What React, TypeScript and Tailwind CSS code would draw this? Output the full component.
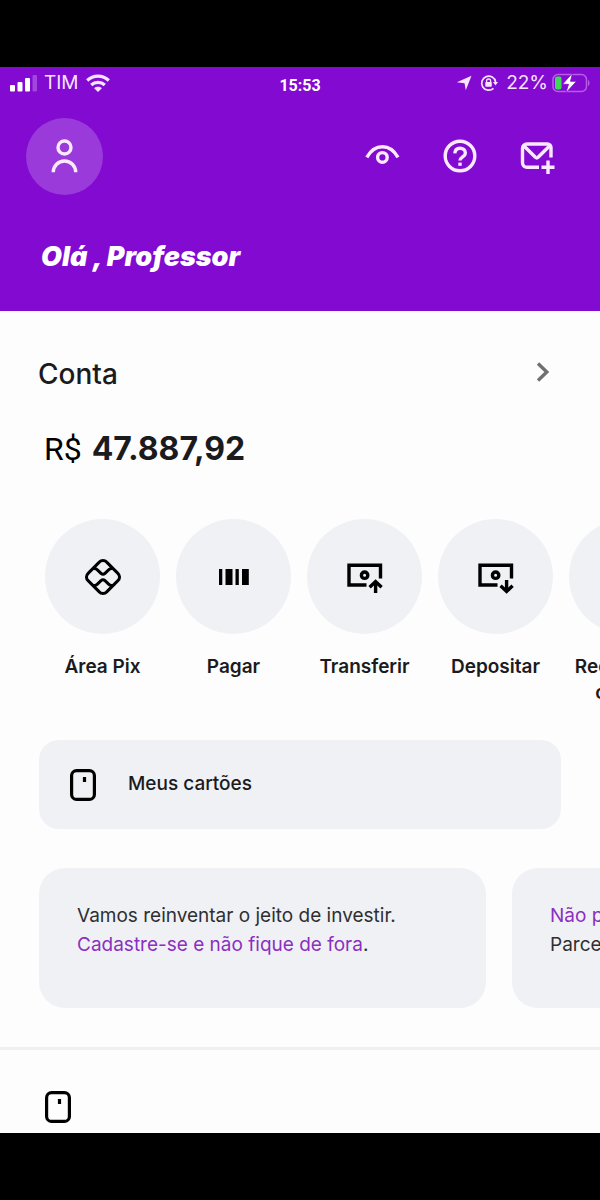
import type { ReactNode } from "react"

const strokeProps = {
  fill: "none",
  stroke: "currentColor",
  strokeWidth: 3.4,
  viewBox: "0 0 40 40",
  "aria-hidden": true,
}

function UserIcon() {
  return (
    <svg {...strokeProps} className="size-10">
      <circle cx="19.5" cy="10.5" r="6.5" />
      <path d="M8.3 35.2a11.2 11.2 0 0 1 22.4 0" />
    </svg>
  )
}

function EyeIcon() {
  return (
    <svg {...strokeProps} className="size-10">
      <path d="M4.8 20.4C12.6 6.2 28.2 6.2 36 20.4" />
      <circle cx="20.4" cy="20.4" r="4.8" />
    </svg>
  )
}

function HelpIcon() {
  return (
    <svg {...strokeProps} className="size-10">
      <circle cx="20" cy="19" r="14.8" />
      <path d="M14.8 16.4c.2-3.4 2.4-5.2 5.2-5.2 3.2 0 5.4 2 5.4 4.7 0 4-5.4 3.9-5.4 7.7" />
      <path d="M20 25.6v3.2" />
    </svg>
  )
}

function MailPlusIcon() {
  return (
    <svg {...strokeProps} className="size-10">
      <path d="M21 30.3H9a4.5 4.5 0 0 1-4.5-4.5V11.5A4.5 4.5 0 0 1 9 7h20.5a3.5 3.5 0 0 1 3.5 3.5v10" />
      <path d="M5.5 8.5l11.9 11.8a2 2 0 0 0 2.7 0L32 8.5" />
      <path d="M30 23.5V37M23.5 30.3h13" />
    </svg>
  )
}

function PixIcon() {
  return (
    <svg {...strokeProps} strokeWidth={3} className="size-10">
      <path d="M16.3 5.1 5.1 16.3a5 5 0 0 0 0 7.4l11.2 11.2a5 5 0 0 0 7.4 0l11.2-11.2a5 5 0 0 0 0-7.4L23.7 5.1a5 5 0 0 0-7.4 0Z" />
      <path d="M10.2 11.6h1.2c1.2 0 2.2.5 3 1.3l3.6 3.4c1.2 1.1 2.800 1.100 4 0l3.600-3.400c.8-.8 1.800-1.300 3-1.300h1.200" />
      <path d="M10.2 28.4h1.2c1.2 0 2.2-.5 3-1.3l3.6-3.4c1.2-1.1 2.800-1.100 4 0l3.600 3.400c.8.8 1.800 1.300 3 1.300h1.200" />
    </svg>
  )
}

function BarcodeIcon() {
  return (
    <svg viewBox="0 0 40 40" fill="currentColor" className="size-10" aria-hidden>
      <path d="M5 12h3.3v16H5zM11.5 12h7v16h-7zM21.5 12h3.3v16h-3.3zM28 12h6.8v16H28z" />
    </svg>
  )
}

function MoneyIcon({ direction }: { direction: "up" | "down" }) {
  return (
    <svg {...strokeProps} className="size-10">
      <path d="M21.5 28H4V8.2h31.5v13.3" />
      <circle cx="19.6" cy="18.2" r="3.2" />
      {direction === "up" ? (
        <path d="M30.6 36V24.5M24.6 30.2l6-5.6 6 5.6" />
      ) : (
        <path d="M30.6 23v11.5M24.6 28.8l6 5.6 6-5.6" />
      )}
    </svg>
  )
}

function PhoneIcon() {
  return (
    <svg {...strokeProps} className="size-10">
      <rect x="10" y="3" width="20" height="34" rx="3" />
      <path d="M17 31h6" />
    </svg>
  )
}

function CardIcon() {
  return (
    <svg viewBox="0 0 26 32" fill="none" stroke="currentColor" strokeWidth="3.2" className="h-8 w-[26px] text-black" aria-hidden>
      <rect x="1.6" y="1.6" width="22.8" height="28.8" rx="5" />
      <path d="M14.5 8v5" />
    </svg>
  )
}

function SignalIcon() {
  return (
    <svg viewBox="0 0 27 18" fill="currentColor" className="h-[18px] w-[27px] text-white" aria-hidden>
      <rect y="11" width="5" height="6.5" rx="1" />
      <rect x="7.5" y="8" width="5" height="9.5" rx="1" />
      <rect x="15" y="4" width="5" height="13.5" rx="1" />
      <rect x="22.5" y="1" width="4.5" height="16.5" rx="1" opacity=".25" />
    </svg>
  )
}

function WifiIcon() {
  return (
    <svg viewBox="0 0 24 18" fill="none" stroke="currentColor" strokeWidth="3.2" className="h-[18px] w-6" aria-hidden>
      <path d="M1.2 6.5C7.3.7 16.7.7 22.8 6.5" />
      <path d="M5.2 11c3.9-3.5 9.7-3.5 13.6 0" />
      <path d="M12 18 8.1 14.2c2.3-1.9 5.5-1.9 7.8 0z" fill="currentColor" stroke="none" />
    </svg>
  )
}

function LocationIcon() {
  return (
    <svg viewBox="0 0 16 16" fill="currentColor" className="size-4" aria-hidden>
      <path d="M15.5.8 9.8 15.3 8.5 8.3.8 7.3z" />
    </svg>
  )
}

function RotationLockIcon() {
  return (
    <svg viewBox="0 0 18 18" fill="none" stroke="currentColor" strokeWidth="1.7" className="size-[18px]" aria-hidden>
      <path d="M13.5 14.3A7 7 0 1 1 15.6 8" />
      <path d="M13 8h5l-2.5 3.5z" fill="currentColor" stroke="none" />
      <rect x="5.3" y="8" width="6.5" height="4.8" rx=".8" fill="currentColor" stroke="none" />
      <path d="M6.6 8.5V7a2 2 0 0 1 4 0v1.5" strokeWidth="1.3" />
    </svg>
  )
}

function BatteryIcon() {
  return (
    <svg viewBox="0 0 38 20" fill="none" className="h-5 w-[38px]" aria-hidden>
      <rect x="1" y="1.5" width="33.5" height="17" rx="5" stroke="#b65fe4" strokeWidth="1.5" />
      <path d="M36 7c2 .8 2 5.2 0 6z" fill="#b65fe4" />
      <rect x="3" y="3.5" width="6.5" height="13" rx="2" fill="#3fd75a" />
      <path d="M20.5 0l-10 11.3h6L13.8 20l10.7-11.7h-6z" fill="#fff" stroke="#820ad1" strokeWidth=".8" />
    </svg>
  )
}

function ChevronIcon() {
  return (
    <svg viewBox="0 0 14 20" fill="none" stroke="#707070" strokeWidth="3.4" className="h-5 w-3.5" aria-hidden>
      <path d="m2 1.5 8.8 8.5L2 18.5" />
    </svg>
  )
}

const actions: { label: string; icon: ReactNode }[] = [
  { label: "Área Pix", icon: <PixIcon /> },
  { label: "Pagar", icon: <BarcodeIcon /> },
  { label: "Transferir", icon: <MoneyIcon direction="up" /> },
  { label: "Depositar", icon: <MoneyIcon direction="down" /> },
  { label: "Recarga de celular", icon: <PhoneIcon /> },
]

function StatusBar() {
  return (
    <div className="grid h-8 grid-cols-3 items-center px-2.5 text-[#f7e4ff]">
      <div className="flex items-center gap-[7px]">
        <SignalIcon />
        <span className="text-[19px] leading-6">TIM</span>
        <WifiIcon />
      </div>
      <span className="pt-1.5 text-center font-['Roboto',sans-serif] text-base leading-6 font-bold text-white">
        15:53
      </span>
      <div className="flex items-center justify-end gap-2">
        <LocationIcon />
        <RotationLockIcon />
        <div className="flex items-center gap-1">
          <span className="text-[19px] leading-6">22%</span>
          <BatteryIcon />
        </div>
      </div>
    </div>
  )
}

function Header() {
  return (
    <header className="bg-[#820ad1] pb-9 text-[#fbeaff]">
      <StatusBar />
      <div className="mt-[19px] flex items-center justify-between pr-[42px] pl-[26px]">
        <button aria-label="Perfil" className="flex size-[77px] items-center justify-center rounded-full bg-[#9b3ada]">
          <UserIcon />
        </button>
        <div className="flex gap-[38px]">
          <button aria-label="Mostrar saldo">
            <EyeIcon />
          </button>
          <button aria-label="Ajuda">
            <HelpIcon />
          </button>
          <button aria-label="Convidar amigos">
            <MailPlusIcon />
          </button>
        </div>
      </div>
      <h1 className="mt-11 pl-[41px] text-[27px] leading-9 font-black text-white italic">Olá , Professor</h1>
    </header>
  )
}

function Account() {
  return (
    <section>
      <div className="flex h-10 items-center justify-between pr-[50px] pl-[38px]">
        <h2 className="pt-1 text-[28px] leading-10 font-medium">Conta</h2>
        <button aria-label="Abrir conta">
          <ChevronIcon />
        </button>
      </div>
      <p className="mt-[37px] flex items-center gap-2.5 pl-11 leading-10">
        <span className="font-['Roboto',sans-serif] text-[32px] text-black">R$</span>
        <span className="text-[32px] font-bold">47.887,92</span>
      </p>
    </section>
  )
}

function QuickActions() {
  return (
    <ul className="mt-[50px] flex gap-4 overflow-hidden pl-[45px]">
      {actions.map((action) => (
        <li key={action.label} className="shrink-0">
          <button className="flex w-[115px] flex-col items-center text-black">
            <span className="flex size-[115px] items-center justify-center rounded-full bg-[#f0f1f5]">
              {action.icon}
            </span>
            <span className="mt-5 text-[19px] leading-[26px] font-semibold text-[#1b1b1d]">{action.label}</span>
          </button>
        </li>
      ))}
    </ul>
  )
}

function Offers() {
  return (
    <div className="mt-[39px] flex gap-[26px] overflow-hidden pl-[39px] text-[19px] leading-[29px] text-[#2e2f33]">
      <article className="h-[140px] w-[447px] shrink-0 rounded-[26px] bg-[#f0f1f5] px-[38px] py-[33px]">
        <p>Vamos reinventar o jeito de investir.</p>
        <p>
          <a href="#investir" className="text-[#8b2fc0]">
            Cadastre-se e não fique de fora
          </a>
          .
        </p>
      </article>
      <article className="h-[140px] w-[447px] shrink-0 rounded-[26px] bg-[#f0f1f5] px-[38px] py-[33px]">
        <p>
          <a href="#fatura" className="text-[#8b2fc0]">
            Não perca o prazo
          </a>
        </p>
        <p>Parcele a sua fatura.</p>
      </article>
    </div>
  )
}

export default function App() {
  return (
    <div className="flex min-h-screen flex-col overflow-hidden bg-black pt-[67px] font-['Inter',sans-serif]">
      <Header />
      <main className="grow bg-[#fdfdfd] pt-[41px] text-[#1b1b1d]">
        <Account />
        <QuickActions />
        <div className="mt-[34px] px-[39px]">
          <button className="flex h-[89px] w-full items-center gap-8 rounded-[20px] bg-[#f0f1f5] px-[31px] text-[19px] font-medium">
            <CardIcon />
            Meus cartões
          </button>
        </div>
        <Offers />
        <section className="mt-[39px] border-t-3 border-[#f0f0f2] pt-[41px] pb-2.5 pl-[45px]">
          <button aria-label="Cartão de crédito" className="block">
            <CardIcon />
          </button>
        </section>
      </main>
      <footer className="h-[67px] bg-black" />
    </div>
  )
}
